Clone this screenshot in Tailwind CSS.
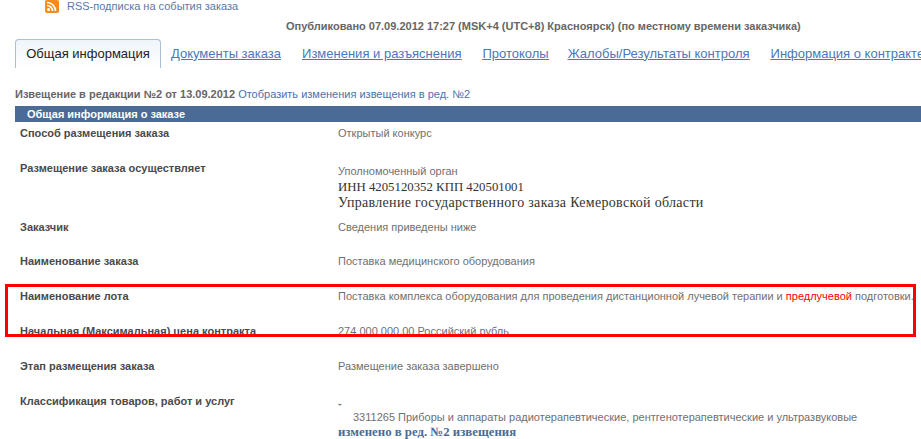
<!DOCTYPE html>
<html lang="ru">
<head>
<meta charset="UTF-8">
<title>Общая информация о заказе</title>
<script src="https://cdn.jsdelivr.net/npm/@tailwindcss/browser@4"></script>
</head>
<body class="bg-white">
<div class="relative h-[439px] w-[921px] overflow-hidden font-['Liberation_Sans',sans-serif] text-[11px] text-[#707070]">

  <!-- rss -->
  <div class="flex h-[12px] items-center pl-[45px] text-[#5a78a8]">
    <svg class="mr-[8px] h-[13px] w-[14px] shrink-0" viewBox="0 0 14 13">
      <rect width="14" height="13" rx="2" fill="#f58a1f"/>
      <circle cx="3.5" cy="9.5" r="1.5" fill="#fff"/>
      <path d="M2 5.5a5.5 5.5 0 0 1 5.5 5.5M2 2.5A8.5 8.5 0 0 1 10.500 11" fill="none" stroke="#fff" stroke-width="1.700"/>
    </svg>
    <a>RSS-подписка на события заказа</a>
  </div>

  <p class="mt-[8px] pl-[286px] leading-[13px] font-bold text-[#666]">Опубликовано 07.09.2012 17:27 (MSK+4 (UTC+8) Красноярск) (по местному времени заказчика)</p>

  <!-- tabs -->
  <div class="mt-[6px] flex h-[29px] pl-[15px] text-[13px] whitespace-nowrap">
    <div class="flex w-[146px] shrink-0 items-center justify-center rounded-t-[4px] border border-b-0 border-[#a9c0d6] bg-linear-to-b from-[#eef5fa] to-white text-[#222]">Общая информация</div>
    <div class="flex items-center gap-[21px] pl-[10px] text-[#4a78b8] underline">
      <a>Документы заказа</a>
      <a>Изменения и разъяснения</a>
      <a>Протоколы</a>
      <a class="-ml-[2px]">Жалобы/Результаты контроля</a>
      <a>Информация о контракте</a>
    </div>
  </div>

  <p class="mt-[20px] pl-[15px] leading-[13px]"><b class="text-[#666]">Извещение в редакции №2 от 13.09.2012</b> <a class="text-[#4a72ac]">Отобразить изменения извещения в ред. №2</a></p>

  <div class="mt-[5px] ml-[15px] h-[16px] bg-[#4a6b96] pl-[12px] leading-[16px] font-bold text-white">Общая информация о заказе</div>

  <!-- rows -->
  <div class="mt-[4px] grid grid-cols-[318px_1fr] pl-[20px] leading-[14px] whitespace-nowrap">
    <b class="h-[35px] text-[#4a4a4a]">Способ размещения заказа</b>
    <span>Открытый конкурс</span>

    <b class="h-[59px] text-[#4a4a4a]">Размещение заказа осуществляет</b>
    <div class="h-[59px]">
      <p class="h-[3px]"></p>
      <p>Уполномоченный орган</p>
      <p class="mt-[1px] font-['Liberation_Serif',serif] text-[12.800px] leading-[16px] text-[#333]">ИНН 4205120352 КПП 420501001</p>
      <p class="font-['Liberation_Serif',serif] text-[14px] leading-[16px] tracking-[0.3px] text-[#333]">Управление государственного заказа Кемеровской области</p>
    </div>

    <b class="h-[34px] text-[#4a4a4a]">Заказчик</b>
    <span>Сведения приведены ниже</span>

    <b class="h-[35px] text-[#4a4a4a]">Наименование заказа</b>
    <span>Поставка медицинского оборудования</span>

    <b class="h-[35px] text-[#4a4a4a]">Наименование лота</b>
    <span>Поставка комплекса оборудования для проведения дистанционной лучевой терапии и <span class="text-[#f00]">предлучевой</span> подготовки.</span>

    <b class="h-[35px] text-[#4a4a4a]">Начальная (Максимальная) цена контракта</b>
    <span>274 000 000,00 Российский рубль</span>

    <b class="h-[35px] text-[#4a4a4a]">Этап размещения заказа</b>
    <span>Размещение заказа завершено</span>

    <b class="text-[#4a4a4a]">Классификация товаров, работ и услуг</b>
    <div>
      <p class="h-[2px]"></p>
      <p class="font-bold">-</p>
      <p class="pl-[15px]">3311265 Приборы и аппараты радиотерапевтические, рентгенотерапевтические и ультразвуковые</p>
      <p class="mt-[1px] font-['Liberation_Serif',serif] text-[12.800px] font-bold text-[#4a6b96]">изменено в ред. №2 извещения</p>
    </div>
  </div>

  <!-- annotation drawn over the page -->
  <div class="absolute top-[284px] left-[5px] h-[53px] w-[911px] border-[3px] border-[#f00]"></div>
</div>
</body>
</html>
